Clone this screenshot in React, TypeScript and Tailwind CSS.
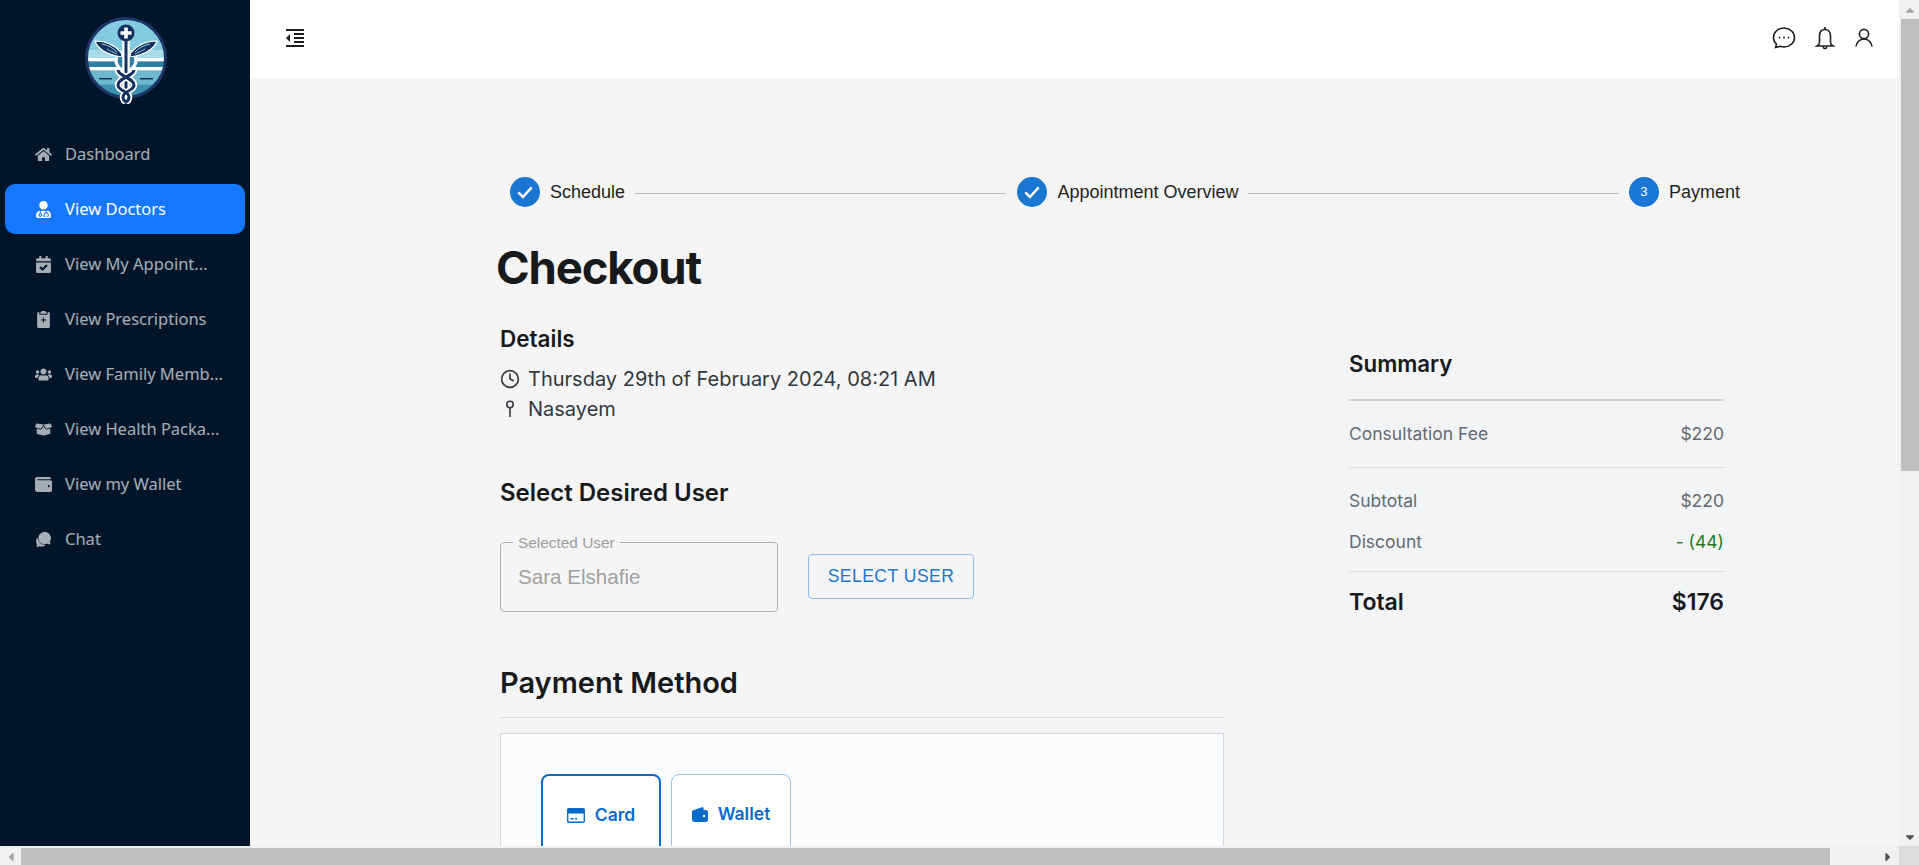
import React from 'react';
import { FaHome, FaUserMd, FaCalendarCheck, FaUsers, FaBoxOpen, FaWallet, FaCaretLeft, FaCaretRight, FaCaretUp, FaCaretDown } from 'react-icons/fa';
import { BsClipboard2PlusFill } from 'react-icons/bs';
import { MdFormatIndentDecrease } from 'react-icons/md';
import { IoChatbubbles } from 'react-icons/io5';
import { FiClock } from 'react-icons/fi';

const navItems = [
  { label: 'Dashboard', icon: FaHome },
  { label: 'View Doctors', icon: FaUserMd, active: true },
  { label: 'View My Appoint...', icon: FaCalendarCheck },
  { label: 'View Prescriptions', icon: BsClipboard2PlusFill },
  { label: 'View Family Memb...', icon: FaUsers },
  { label: 'View Health Packa...', icon: FaBoxOpen },
  { label: 'View my Wallet', icon: FaWallet },
  { label: 'Chat', icon: IoChatbubbles },
];

function Logo() {
  const rope = 'M34 54c0 6 16 8 16 15c0 6-11 6-11 12c0 2 1 4 3 5 M50 54c0 6-16 8-16 15c0 6 11 6 11 12c0 2-1 4-3 5';
  return (
    <svg width="84" height="88" viewBox="0 0 84 88">
      <defs>
        <clipPath id="logo-disc">
          <circle cx="42" cy="42" r="39" />
        </clipPath>
      </defs>
      <g clipPath="url(#logo-disc)">
        <rect width="84" height="88" fill="#84cbdf" />
        <rect y="34" width="84" height="8" fill="#a9dbe8" />
        <rect y="42" width="84" height="3.5" fill="#fff" />
        <rect y="45.5" width="84" height="5.5" fill="#2f7fa3" />
        <rect y="51" width="84" height="3.5" fill="#fff" />
        <rect y="54.5" width="84" height="14" fill="#6db7cf" />
        <rect y="68.5" width="84" height="20" fill="#3f8fb0" />
        <path d="M15 62h13v1.6H15z M56 62h13v1.6H56z" fill="#14305f" />
      </g>
      <circle cx="42" cy="42" r="39.5" fill="none" stroke="#1d3566" strokeWidth="3" />
      <path d="M37.500 37C31 29 22 25 11 25c2 6 10 14 27 16z M46.500 37C53 29 62 25 73 25c-2 6-10 14-27 16z" fill="#14305f" stroke="#fff" strokeWidth="1.2" />
      <path d="M18 28c6 1 11 4 15 8 M23 33c3 2 6 3 10 5 M66 28c-6 1-11 4-15 8 M61 33c-3 2-6 3-10 5" fill="none" stroke="#9ad3e4" strokeWidth="1" />
      <path d="M33 41c-3 6 2 13 9 14c7-1 12-8 9-14" fill="#2f7fa3" stroke="#fff" strokeWidth="3.2" />
      <path d="M42 22v64" stroke="#fff" strokeWidth="7.5" />
      <path d="M42 22v64" stroke="#14305f" strokeWidth="3" />
      <circle cx="42" cy="17" r="8.5" fill="#14305f" />
      <path d="M40.200 11.500h3.600v3.700h3.700v3.600h-3.700v3.700h-3.600v-3.700h-3.700v-3.600h3.700z" fill="#fff" />
      <path d={rope} fill="none" stroke="#fff" strokeWidth="6.5" />
      <path d={rope} fill="none" stroke="#14305f" strokeWidth="3" />
    </svg>
  );
}

function Sidebar() {
  return (
    <aside className="w-[250px] shrink-0 bg-[#001529] flex flex-col">
      <div className="h-[121px] pt-[16px] pl-[2px] flex justify-center shrink-0">
        <Logo />
      </div>
      <nav className="flex flex-col gap-[5px] px-[5px] mt-[8px] font-['Noto_Sans',sans-serif]">
        {navItems.map((item) => {
          const Icon = item.icon;
          return (
            <div
              key={item.label}
              className={`h-[50px] rounded-[10px] flex items-center pl-[30px] gap-[13px] text-[16.5px] whitespace-nowrap ${
                item.active ? 'bg-[#1677ff] text-white' : 'text-white/65'
              }`}
            >
              <Icon className="w-[17px] h-[17px] shrink-0" />
              <span>{item.label}</span>
            </div>
          );
        })}
      </nav>
    </aside>
  );
}

function Step({ label, done, num }: { label: string; done?: boolean; num?: number }) {
  return (
    <div className="flex items-center gap-[10px] shrink-0">
      <div className="w-[30px] h-[30px] rounded-full bg-[#1976d2] flex items-center justify-center text-white text-[13px] font-['Liberation_Sans',sans-serif]">
        {done ? (
          <svg className="w-[20px] h-[20px]" viewBox="0 0 24 24" fill="none" stroke="currentColor" strokeWidth="3">
            <path d="M4 12.500l5.500 5.500L20 6.500" />
          </svg>
        ) : (
          num
        )}
      </div>
      <span className="text-[18px] text-[#1f1f1f] font-['Liberation_Sans',sans-serif]">{label}</span>
    </div>
  );
}

function Stepper() {
  return (
    <div className="flex items-center ml-[10px] w-[1230px]">
      <Step label="Schedule" done />
      <div className="flex-1 h-px bg-[#bdbdbd] ml-[10px] mr-[11px] mt-[2px]" />
      <Step label="Appointment Overview" done />
      <div className="flex-1 h-px bg-[#bdbdbd] ml-[9px] mr-[10px] mt-[2px]" />
      <Step label="Payment" num={3} />
    </div>
  );
}

function SummaryRow({ label, value, green }: { label: string; value: string; green?: boolean }) {
  return (
    <div className="flex justify-between text-[17.5px] leading-[24px] text-[#636b74]">
      <span>{label}</span>
      <span className={green ? 'text-[#1f7a1f]' : ''}>{value}</span>
    </div>
  );
}

function Summary() {
  return (
    <section className="w-[426px] bg-[#f3f4f6] pl-[26px] pr-[25px] pt-[27px] h-[600px] shrink-0">
      <h2 className="text-[22.3px] leading-[26px] font-semibold text-[#171a1c] pb-[22px] border-b-2 border-[#d1d2d5]">Summary</h2>
      <div className="pt-[21px] pb-[21px] border-b border-[#d9dbde]">
        <SummaryRow label="Consultation Fee" value="$220" />
      </div>
      <div className="pt-[21px] pb-[17px] flex flex-col gap-[17px] border-b border-[#d9dbde]">
        <SummaryRow label="Subtotal" value="$220" />
        <SummaryRow label="Discount" value="- (44)" green />
      </div>
      <div className="flex justify-between pt-[15px] text-[23px] leading-[30px] font-semibold text-[#171a1c]">
        <span>Total</span>
        <span>$176</span>
      </div>
    </section>
  );
}

function CardIcon() {
  return (
    <svg className="w-[18px] h-[15px]" viewBox="0 0 18 15">
      <rect x="0.7" y="0.7" width="16.6" height="13.6" rx="1" fill="#fff" stroke="currentColor" strokeWidth="1.4" />
      <rect x="1" y="1" width="16" height="4.5" fill="currentColor" />
      <path d="M3.500 10h3v1.600h-3z M8 10h2v1.600H8z" fill="currentColor" />
    </svg>
  );
}

function WalletIcon() {
  return (
    <svg className="w-[16px] h-[15px]" viewBox="0 0 16 15">
      <path d="M2 3L10 0.300c1-.3 1.600.2 1.600 1V3H14c1.100 0 2 .9 2 2v8c0 1.100-.9 2-2 2H2.500C1.100 15 0 13.900 0 12.500V5c0-1 .8-1.700 2-2z" fill="currentColor" />
      <circle cx="12" cy="9" r="1.200" fill="#fff" />
    </svg>
  );
}

function Tab({ label, icon, active }: { label: string; icon: React.ReactNode; active?: boolean }) {
  return (
    <div
      className={`w-[120px] h-[100px] rounded-[8px] bg-white flex justify-center pt-[25px] text-[17.5px] font-semibold text-[#0b6bcb] ${
        active ? 'border-2 border-[#0b6bcb]' : 'border border-[#97c3f0]'
      }`}
    >
      <span className="flex items-center gap-[10px] h-[28px]">
        {icon}
        {label}
      </span>
    </div>
  );
}

function Details() {
  return (
    <section className="w-[724px] shrink-0">
      <h2 className="text-[22.5px] leading-[30px] font-semibold text-[#171a1c]">Details</h2>
      <div className="mt-[10px] flex flex-col text-[20px] leading-[30px] text-[#32383e]">
        <div className="flex items-center gap-[8px]">
          <FiClock className="w-[20px] h-[20px]" />
          <span>Thursday 29th of February 2024, 08:21 AM</span>
        </div>
        <div className="flex items-center gap-[8px]">
          <svg className="w-[20px] h-[20px]" viewBox="0 0 20 20" fill="none" stroke="currentColor" strokeWidth="1.6">
            <circle cx="10" cy="5.500" r="3.200" />
            <path d="M10 9v9" />
          </svg>
          <span>Nasayem</span>
        </div>
      </div>
      <h2 className="mt-[52px] text-[24px] leading-[34px] font-semibold text-[#171a1c]">Select Desired User</h2>
      <div className="mt-[25px] flex items-start gap-[30px]">
        <fieldset className="w-[278px] h-[77px] border border-[#b0b0b0] rounded-[4px] px-[12px]">
          <legend className="px-[5px] text-[15.4px] leading-[15px] text-[#9e9e9e] font-['Liberation_Sans',sans-serif]">Selected User</legend>
          <div className="pl-[5px] pt-[11px] text-[20.6px] leading-[31px] text-[#a0a0a0] font-['Liberation_Sans',sans-serif]">Sara Elshafie</div>
        </fieldset>
        <button className="mt-[19px] w-[166px] h-[45px] border border-[#90bdf0] rounded-[4px] text-[17.5px] tracking-[0.5px] text-[#1976d2] font-['Liberation_Sans',sans-serif]">SELECT USER</button>
      </div>
      <h2 className="mt-[51px] text-[29px] leading-[40px] font-semibold text-[#171a1c]">Payment Method</h2>
      <div className="mt-[14px] h-px bg-[#d9d9d9]" />
      <div className="mt-[15px] h-[300px] bg-[#fbfcfe] border border-[#cdd7e1] pl-[40px] pt-[40px] flex gap-[10px]">
        <Tab label="Card" active icon={<CardIcon />} />
        <Tab label="Wallet" icon={<WalletIcon />} />
      </div>
    </section>
  );
}

function VScroll() {
  return (
    <div className="w-[20px] shrink-0 bg-[#f1f1f1] flex flex-col items-end">
      <div className="w-[18px] h-[19px] flex items-center justify-center text-[#a3a3a3]"><FaCaretUp className="w-[14px] h-[14px]" /></div>
      <div className="w-[18px] h-[452px] bg-[#bfbfbf]" />
      <div className="flex-1" />
      <div className="w-[18px] h-[19px] flex items-center justify-center text-[#505050]"><FaCaretDown className="w-[14px] h-[14px]" /></div>
    </div>
  );
}

function HScroll() {
  return (
    <div className="h-[19px] shrink-0 flex bg-[#f1f1f1]">
      <div className="flex-1 flex items-end">
        <div className="w-[21px] h-[17px] flex items-center justify-center text-[#a3a3a3]"><FaCaretLeft className="w-[14px] h-[14px]" /></div>
        <div className="w-[1809px] h-[17px] bg-[#bfbfbf]" />
        <div className="flex-1 h-[17px] flex items-center justify-end pr-[4px] text-[#505050]"><FaCaretRight className="w-[14px] h-[14px]" /></div>
      </div>
      <div className="w-[20px] bg-[#dcdcdc]" />
    </div>
  );
}

function HeaderIcons() {
  return (
    <div className="flex items-center gap-[18px] text-[#1f1f1f] -mt-[2px]">
      <svg className="w-[24px] h-[24px]" viewBox="0 0 24 24" fill="none" stroke="currentColor" strokeWidth="1.6">
        <path d="M12 2C6.200 2 1.500 6.200 1.500 11.500c0 2.600 1.100 4.900 2.900 6.600L3.600 21.500l4.600-1.200c1.200.4 2.500.7 3.800.7c5.800 0 10.500-4.200 10.500-9.500S17.800 2 12 2z" />
        <circle cx="7.500" cy="11.500" r="0.9" fill="currentColor" stroke="none" />
        <circle cx="12" cy="11.500" r="0.9" fill="currentColor" stroke="none" />
        <circle cx="16.500" cy="11.500" r="0.9" fill="currentColor" stroke="none" />
      </svg>
      <svg className="w-[22px] h-[24px]" viewBox="0 0 22 24" fill="none" stroke="currentColor" strokeWidth="1.6">
        <path d="M11 3.500c-3.500 0-5.500 2.700-5.500 6.500v6.500c0 1.300-.9 2.500-2.500 3.500h16c-1.600-1-2.500-2.200-2.500-3.500V10c0-3.800-2-6.500-5.500-6.500z" />
        <path d="M11 1v2.500" />
        <path d="M9 20.500c.2 1.500 1 2 2 2s1.800-.5 2-2" />
      </svg>
      <svg className="w-[20px] h-[22px]" viewBox="0 0 20 22" fill="none" stroke="currentColor" strokeWidth="1.6">
        <circle cx="10" cy="7" r="4.600" />
        <path d="M2 19.500c.5-4 3.500-7.500 8-7.500s7.500 3.500 8 7.500" />
      </svg>
    </div>
  );
}

export default function App() {
  return (
    <div className="w-[1919px] h-[865px] overflow-hidden flex flex-col font-['Inter',sans-serif] bg-[#f5f5f5]">
      <div className="flex flex-1 min-h-0">
        <Sidebar />
        <div className="flex-1 min-w-0 flex flex-col overflow-hidden">
          <header className="h-[78px] bg-white flex items-center justify-between shrink-0 pl-[33px] pr-[25px]">
            <MdFormatIndentDecrease className="w-[24px] h-[24px] text-[#1f1f1f] -mt-[2px]" />
            <HeaderIcons />
          </header>
          <main className="flex-1 min-h-0 overflow-hidden pl-[250px] pt-[99px]">
            <Stepper />
            <h1 className="ml-[-4px] mt-[31px] text-[45.5px] leading-[60px] font-bold tracking-tight text-[#171a1c]">Checkout</h1>
            <div className="mt-[26px] flex gap-[99px]">
              <Details />
              <Summary />
            </div>
          </main>
        </div>
        <VScroll />
      </div>
      <HScroll />
    </div>
  );
}
